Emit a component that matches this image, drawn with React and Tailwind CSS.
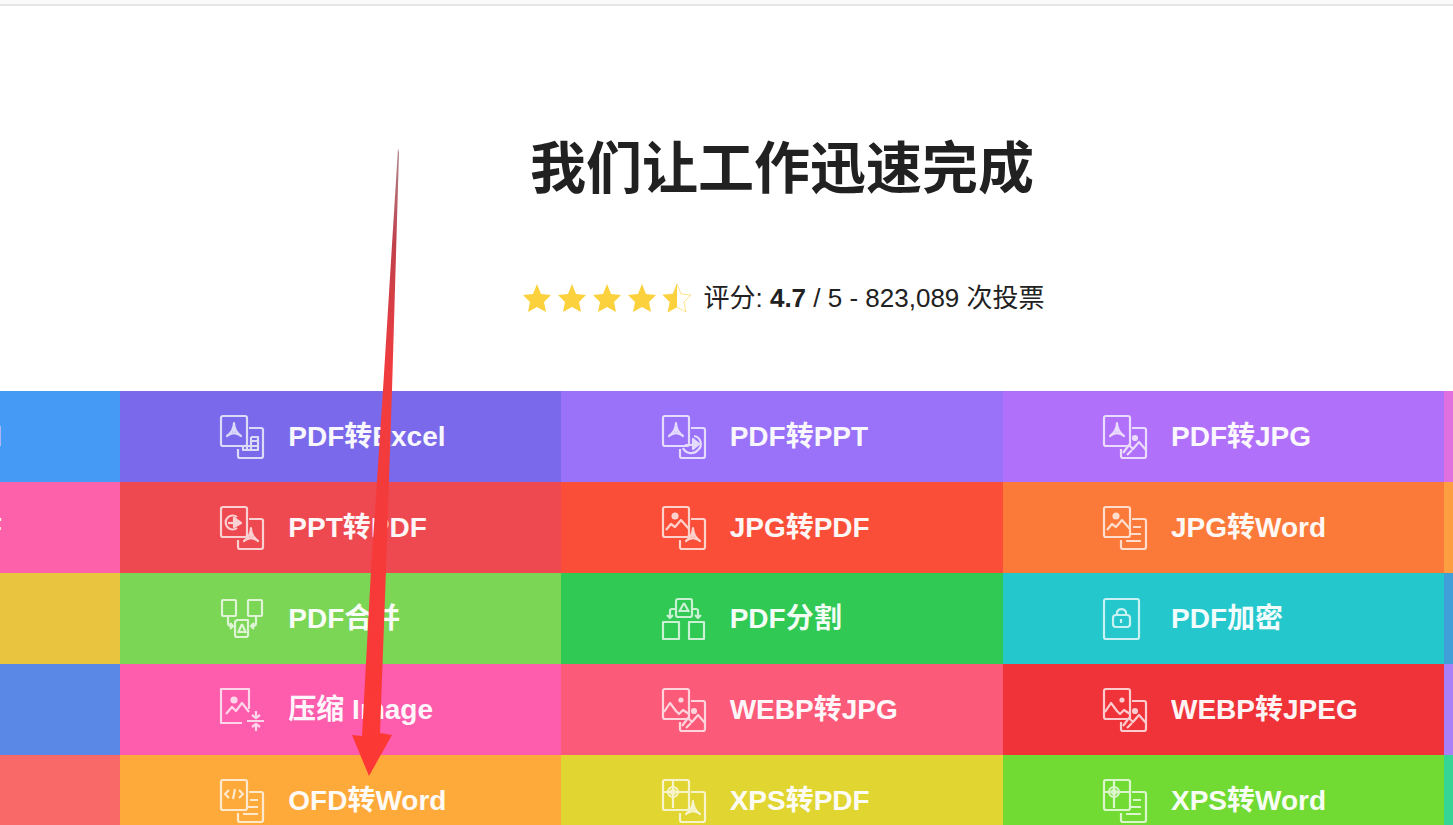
import React from 'react';

const FRONT_GLYPHS = {
  pdf: (
    <>
      <path d="M14 8c0 5-3 10-7 13 5-4 9-4 14 0-4-3-7-8-7-13z" />
      <path d="M14 12v5" />
    </>
  ),
  ppt: (
    <>
      <path d="M17 11a7 7 0 1 0 0 11" />
      <path d="M14 12v9l7-4z" fill="currentColor" />
      <path d="M8 17h6" />
    </>
  ),
  jpg: (
    <>
      <circle cx="13" cy="10" r="2.5" fill="currentColor" />
      <path d="M4 24l5-6 4 3 6-7 8 9" />
    </>
  ),
  webp: (
    <>
      <circle cx="19" cy="12" r="1.5" fill="currentColor" />
      <path d="M2 24l6-9 6 8 3 3 4-4 6 4" />
    </>
  ),
  ofd: <path d="M9 11l-4 4 4 4M19 11l4 4-4 4M15 10l-2 10" />,
  xps: (
    <>
      <circle cx="11" cy="13" r="5" />
      <path d="M11 2v27M2 13h24" />
      <circle cx="11" cy="13" r="2" fill="currentColor" />
    </>
  ),
};

const BACK_GLYPHS = {
  pdf: (
    <>
      <path d="M31 22c0 5-3 10-7 13 5-4 9-4 14 0-4-3-7-8-7-13z" />
      <path d="M31 26v5" />
    </>
  ),
  excel: <path d="M31 22h7v13H23v-3M31 22v13M31 26h7M27 31h11M27 31v4" />,
  ppt: (
    <>
      <path d="M21 33a9 9 0 0 0 15 2M32 21a8 8 0 0 1 4 14" />
      <path d="M31 24v10l6-5zM23 30h8" fill="currentColor" />
    </>
  ),
  jpg: (
    <>
      <circle cx="32" cy="23" r="2" fill="currentColor" />
      <path d="M20 38l6-8 4 4 6-7 7 8M24 40l5-5" />
    </>
  ),
  word: <path d="M30 21h8M27 28h11M23 35h15" />,
};

function ConvertIcon({ from, to }) {
  return (
    <>
      <rect x="1" y="1" width="26" height="30" rx="2" />
      <path d="M29 13h12a2 2 0 0 1 2 2v26a2 2 0 0 1-2 2H20a2 2 0 0 1-2-2v-7" />
      {FRONT_GLYPHS[from]}
      {BACK_GLYPHS[to]}
    </>
  );
}

const SPECIAL_ICONS = {
  merge: (
    <>
      <rect x="2" y="3" width="14" height="16" rx="1" />
      <rect x="28" y="3" width="14" height="16" rx="1" />
      <path d="M15 26a3 3 0 0 1 3-3h10v15a2 2 0 0 1-2 2H17a2 2 0 0 1-2-2z" />
      <path d="M22 27l-4 9M22 27l4 9M18 35h8" />
      <path d="M8 20v6a3 3 0 0 0 3 3h2M10 26l3 3-3 3M36 20v6a3 3 0 0 1-3 3h-2M34 26l-3 3 3 3" />
    </>
  ),
  split: (
    <>
      <rect x="14" y="2" width="16" height="18" rx="2" />
      <path d="M22 6l-5 9M22 6l5 9M18 14h8" />
      <rect x="1" y="25" width="16" height="17" />
      <rect x="27" y="25" width="15" height="17" />
      <path d="M14 12h-4a2 2 0 0 0-2 2v7M5 18l3 3 3-3M30 12h4a2 2 0 0 1 2 2v7M33 18l3 3 3-3" />
    </>
  ),
  lock: (
    <>
      <rect x="1" y="2" width="35" height="40" rx="2" />
      <rect x="10" y="18" width="17" height="12" rx="3" />
      <path d="M14 18v-3a5 5 0 0 1 9 0v3M18 22v4" />
    </>
  ),
  compress: (
    <>
      <path d="M29 21V1H1v34h21" />
      <circle cx="14" cy="12" r="2.5" fill="currentColor" />
      <path d="M6 26l6-7 4 4 6-8 7 9" />
      <path d="M27 33h17M36 23v7M36 43v-7M32 27l4 3 4-3M32 39l4-3 4 3" />
    </>
  ),
};

const tools = [
  { label: 'PDF转Word', from: 'pdf', to: 'word', color: 'bg-[#449af4]' },
  { label: 'PDF转Excel', from: 'pdf', to: 'excel', color: 'bg-[#7a69ea]' },
  { label: 'PDF转PPT', from: 'pdf', to: 'ppt', color: 'bg-[#9a71f9]' },
  { label: 'PDF转JPG', from: 'pdf', to: 'jpg', color: 'bg-[#b070fa]' },
  { color: 'bg-[#e070e0]' },
  { label: 'Word转PDF', from: 'ofd', to: 'pdf', color: 'bg-[#fd61a9]' },
  { label: 'PPT转PDF', from: 'ppt', to: 'pdf', color: 'bg-[#ee4950]' },
  { label: 'JPG转PDF', from: 'jpg', to: 'pdf', color: 'bg-[#fa4e38]' },
  { label: 'JPG转Word', from: 'jpg', to: 'word', color: 'bg-[#fc7a39]' },
  { color: 'bg-[#fd9f41]' },
  { color: 'bg-[#e8c43f]' },
  { label: 'PDF合并', icon: 'merge', color: 'bg-[#7bd656]' },
  { label: 'PDF分割', icon: 'split', color: 'bg-[#2fc954]' },
  { label: 'PDF加密', icon: 'lock', color: 'bg-[#24c8cc]' },
  { color: 'bg-[#409fd8]' },
  { color: 'bg-[#5988e6]' },
  { label: '压缩 Image', icon: 'compress', color: 'bg-[#fe5cad]' },
  { label: 'WEBP转JPG', from: 'webp', to: 'jpg', color: 'bg-[#fc5a79]' },
  { label: 'WEBP转JPEG', from: 'webp', to: 'jpg', color: 'bg-[#f03239]' },
  { color: 'bg-[#aa80f8]' },
  { color: 'bg-[#f86967]' },
  { label: 'OFD转Word', from: 'ofd', to: 'word', color: 'bg-[#feaa3b]' },
  { label: 'XPS转PDF', from: 'xps', to: 'pdf', color: 'bg-[#e1d531]' },
  { label: 'XPS转Word', from: 'xps', to: 'word', color: 'bg-[#71db33]' },
  { color: 'bg-[#35d596]' },
];

const STAR = 'M14 0l4 10 10 1-7 7 2 10-9-5-9 5 2-10-7-7 10-1z';

function Star({ half }) {
  return (
    <svg viewBox="0 0 28 28" className="size-7 text-[#fbd13d]" aria-hidden="true">
      {half ? (
        <>
          <path d={STAR} fill="none" stroke="currentColor" strokeWidth="1" opacity="0.6" />
          <path d="M14 0v23l-9 5 2-10-7-7 10-1z" fill="currentColor" />
        </>
      ) : (
        <path d={STAR} fill="currentColor" />
      )}
    </svg>
  );
}

function ToolTile({ tool }) {
  return (
    <li className={`flex justify-end overflow-hidden ${tool.color}`}>
      {tool.label && (
        <a href="#" className="flex w-[441px] shrink-0 items-center gap-6 pl-[100px] text-white">
          <svg
            viewBox="0 0 44 44"
            className="size-11 shrink-0 overflow-visible opacity-75"
            fill="none"
            stroke="currentColor"
            strokeWidth="2.2"
            strokeLinejoin="round"
            aria-hidden="true"
          >
            {tool.icon ? SPECIAL_ICONS[tool.icon] : <ConvertIcon from={tool.from} to={tool.to} />}
          </svg>
          <span className="text-[28px] leading-9 font-bold whitespace-nowrap opacity-95">{tool.label}</span>
        </a>
      )}
    </li>
  );
}

function Arrow() {
  return (
    <svg viewBox="0 0 52 630" className="pointer-events-none absolute top-[148px] left-[350px] h-[630px] w-[52px]" aria-hidden="true">
      <defs>
        <linearGradient id="shaft" x1="0" y1="0" x2="0" y2="630" gradientUnits="userSpaceOnUse">
          <stop offset="0" stopColor="#b08a90" />
          <stop offset="0.15" stopColor="#c0404c" />
          <stop offset="0.35" stopColor="#f03c3e" />
          <stop offset="1" stopColor="#fd3834" />
        </linearGradient>
      </defs>
      <path d="M48 0L49 5 42 242 36 422 30 585 42 587 19 628 2 587 12 588 21 422 33 242z" fill="url(#shaft)" />
    </svg>
  );
}

export default function App() {
  return (
    <div
      lang="zh-CN"
      className="relative h-screen overflow-hidden bg-white font-['Liberation_Sans','Noto_Sans_CJK_SC',sans-serif] text-[#212121]"
    >
      <header className="h-1.5 border-b-2 border-[#e6e6e6] bg-[#fafafa]" />

      <section className="flex flex-col items-center pt-[127px] pr-[9px] pb-[75px] pl-[120px]">
        <h1 className="text-[56px] leading-[72px] font-bold">我们让工作迅速完成</h1>
        <div className="mt-[75px] flex h-9 items-center gap-3 pl-1">
          <div className="flex gap-[7px]">
            <Star />
            <Star />
            <Star />
            <Star />
            <Star half />
          </div>
          <p className="text-[26px] leading-9">
            评分: <strong>4.7</strong> / 5 - 823,089 次投票
          </p>
        </div>
      </section>

      <ul className="grid auto-rows-[91px] grid-cols-[120px_repeat(3,minmax(0,1fr))_9px]">
        {tools.map((tool, index) => (
          <ToolTile key={index} tool={tool} />
        ))}
      </ul>

      <Arrow />
    </div>
  );
}
